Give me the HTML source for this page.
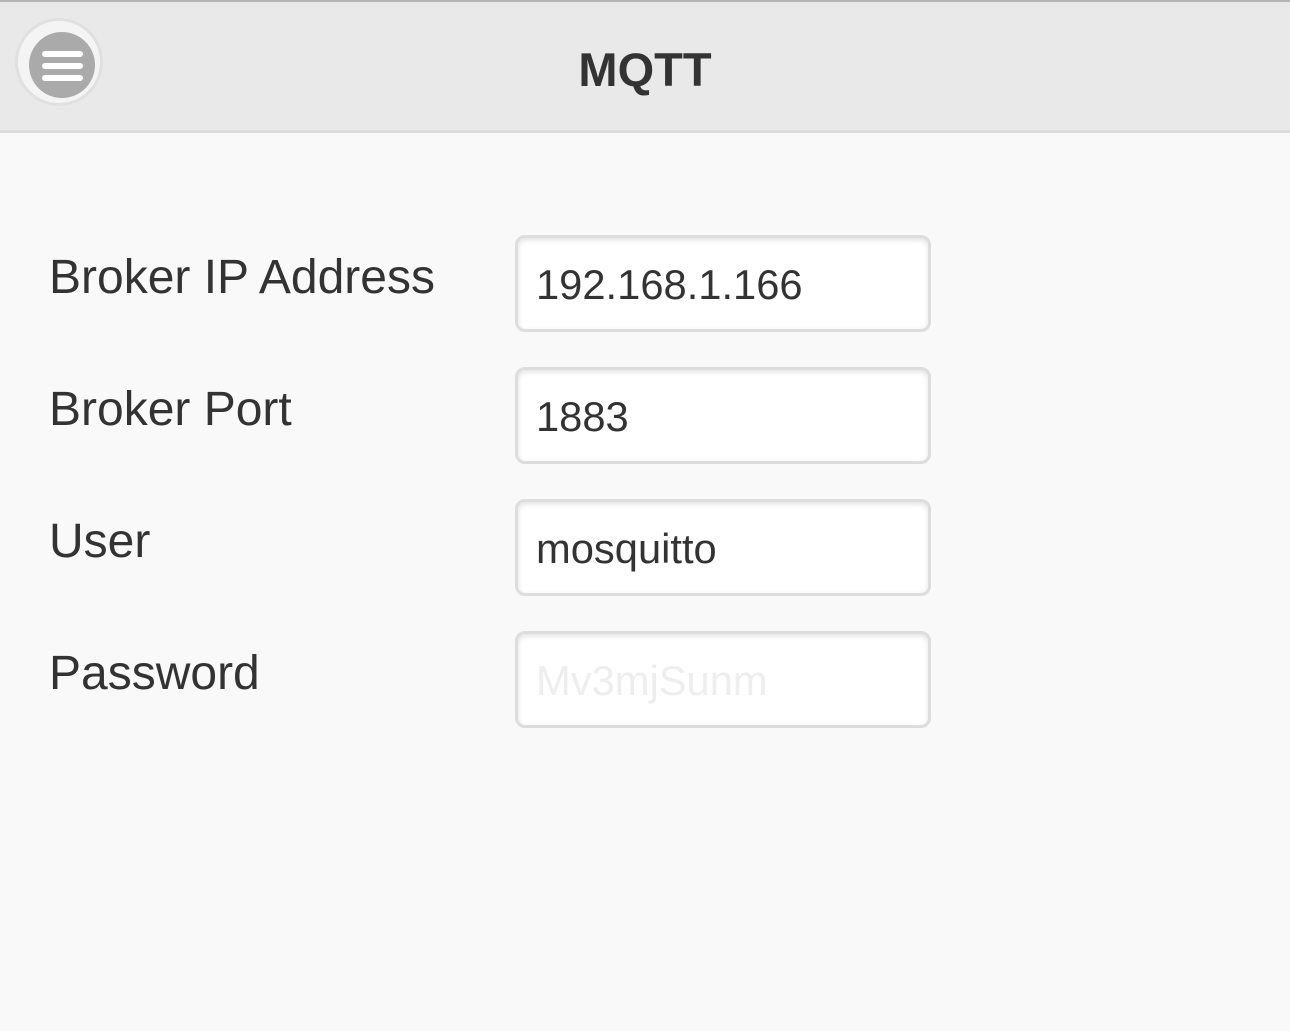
<!DOCTYPE html>
<html><head><style>
body{margin:0;width:1290px;height:1031px;background:#f9f9f9;font-family:"Liberation Sans",sans-serif;color:#333;overflow:hidden;position:relative}
.hdr{position:absolute;left:0;top:0;width:1290px;height:128px;background:#e9e9e9;border-top:2px solid #b5b5b5;border-bottom:3px solid #ddd}
.ttl{position:absolute;left:0;width:1290px;top:40px;text-align:center;font-weight:bold;font-size:47px;color:#333}
.btn{position:absolute;left:15px;top:16px;width:82px;height:82px;border-radius:50%;background:#f4f4f4;border:3px solid #e0e0e0}
.in{position:absolute;left:11px;top:11px;width:66px;height:66px;border-radius:50%;background:#aaa}
.in i{position:absolute;left:13px;width:41px;height:6px;border-radius:3px;background:#fff}
.lbl{position:absolute;left:49px;font-size:48px;color:#333}
.inp{position:absolute;left:515px;width:410px;height:91px;border:3px solid #ddd;border-radius:10px;background:#fff;box-shadow:inset 0 2px 6px rgba(0,0,0,.12);box-sizing:content-box}
.inp span{position:absolute;left:18px;top:23px;font-size:41.7px;color:#333}
</style></head><body>
<div class="hdr"><div class="ttl">MQTT</div>
<div class="btn"><div class="in"><i style="top:19px"></i><i style="top:31px"></i><i style="top:43px"></i></div></div></div>
<div class="lbl" style="top:250px">Broker IP Address</div>
<div class="lbl" style="top:382px">Broker Port</div>
<div class="lbl" style="top:514px">User</div>
<div class="lbl" style="top:646px">Password</div>
<div class="inp" style="top:235px"><span>192.168.1.166</span></div>
<div class="inp" style="top:367px"><span>1883</span></div>
<div class="inp" style="top:499px"><span>mosquitto</span></div>
<div class="inp" style="top:631px"><span style="color:#eee">Mv3mjSunm</span></div>
</body></html>
